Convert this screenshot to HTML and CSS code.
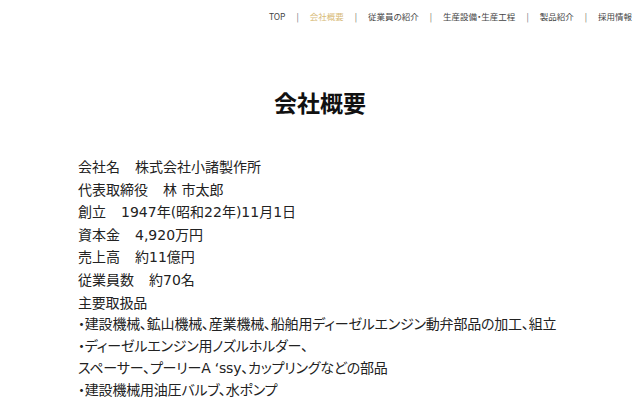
FILE: index.html
```html
<!DOCTYPE html>
<html lang="ja">
  <head>
    <meta charset="UTF-8" />
    <meta name="viewport" content="width=device-width, initial-scale=1.0" />
    <title>会社概要</title>
    <link rel="stylesheet" href="styles.css">
  </head>
  <body>
    <header class="site-header">
      <nav class="global-nav">
        <a href="#">TOP</a>
        <span class="sep">|</span>
        <a href="#" class="current">会社概要</a>
        <span class="sep">|</span>
        <a href="#">従業員の紹介</a>
        <span class="sep">|</span>
        <a href="#">生産設備・生産工程</a>
        <span class="sep">|</span>
        <a href="#">製品紹介</a>
        <span class="sep">|</span>
        <a href="#">採用情報</a>
      </nav>
    </header>

    <main class="company">
      <h1 class="page-title">会社概要</h1>

      <dl class="profile">
        <div class="row"><dt>会社名</dt><dd>株式会社小諸製作所</dd></div>
        <div class="row"><dt>代表取締役</dt><dd>林 市太郎</dd></div>
        <div class="row"><dt>創立</dt><dd>1947年(昭和22年)11月1日</dd></div>
        <div class="row"><dt>資本金</dt><dd>4,920万円</dd></div>
        <div class="row"><dt>売上高</dt><dd>約11億円</dd></div>
        <div class="row"><dt>従業員数</dt><dd>約70名</dd></div>
      </dl>

      <div class="products">
        <p class="products-head">主要取扱品</p>
        <p>・建設機械、鉱山機械、産業機械、船舶用ディーゼルエンジン動弁部品の加工、組立</p>
        <p>・ディーゼルエンジン用ノズルホルダー、<br>スペーサー、プーリーA ‘ssy、カップリングなどの部品</p>
        <p>・建設機械用油圧バルブ、水ポンプ</p>
      </div>
    </main>
  </body>
</html>
```

FILE: styles.css
```css
* {
  margin: 0;
  padding: 0;
  box-sizing: border-box;
}
body {
  background-color: #ffffff;
  color: #222222;
  font-family: "DejaVu Sans", "Noto Sans CJK JP", sans-serif;
  font-feature-settings: "palt";
}
.site-header {
  display: flex;
  justify-content: flex-end;
  padding: 9px 8px 0 0;
}
.global-nav {
  display: flex;
  align-items: center;
  font-family: "Noto Sans CJK JP", sans-serif;
  font-size: 8.5px;
  line-height: 14px;
}
.global-nav a {
  color: #444444;
  text-decoration: none;
}
.global-nav a.current {
  color: #d8bb78;
}
.global-nav .sep {
  color: #666666;
  padding: 0 11px;
}
.company {
  padding: 0 30px 0 78px;
}
.page-title {
  text-align: center;
  font-family: "Noto Sans CJK JP", sans-serif;
  font-size: 23px;
  font-weight: bold;
  color: #111111;
  margin: 62px 0 0 -48px;
  line-height: 34px;
}
.profile {
  margin-top: 37px;
  font-size: 14px;
  line-height: 22.6px;
}
.profile .row {
  display: flex;
}
.profile dt {
  margin-right: 15px;
}
.products {
  margin-top: 1px;
  font-size: 14px;
  line-height: 21.8px;
  letter-spacing: -0.2px;
}
```
